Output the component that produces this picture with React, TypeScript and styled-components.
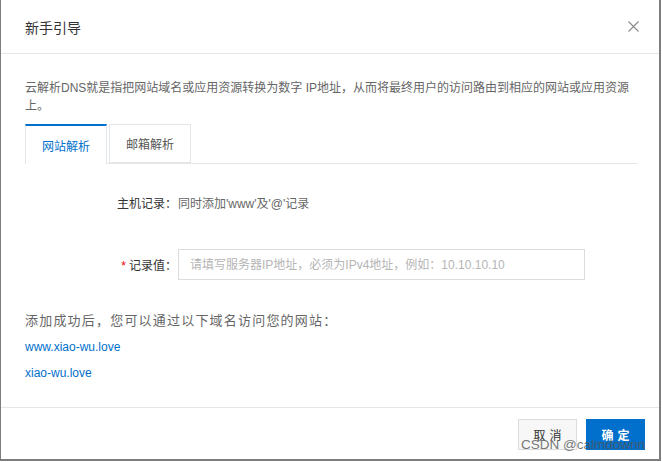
import React from 'react';
import styled, {createGlobalStyle} from "styled-components";

const GlobalStyle = createGlobalStyle`
  html, body {
    margin: 0;
    padding: 0;
    background: #fff;
  }
  body {
    font-family: "Liberation Sans", "Noto Sans CJK SC", sans-serif;
    font-size: 12px;
    color: #333;
  }
`;

const Dialog = styled.div`
  position: relative;
  box-sizing: border-box;
  width: 661px;
  height: 461px;
  display: flex;
  flex-direction: column;
  background: #fff;
  border-left: 1px solid #7d7d7d;
  border-right: 2px solid #7d7d7d;
  border-bottom: 2px solid #7d7d7d;
`;

const Header = styled.div`
  box-sizing: border-box;
  height: 54px;
  flex-shrink: 0;
  display: flex;
  align-items: center;
  justify-content: space-between;
  padding: 0 20px 0 24px;
  border-bottom: 1px solid #e6e6e6;
`;

const Title = styled.div`
  font-size: 14px;
  color: #333;
`;

const CloseButton = styled.div`
  width: 12px;
  height: 12px;
  display: flex;
  align-items: center;
  justify-content: center;
  cursor: pointer;
`;

const Body = styled.div`
  flex: 1;
  padding: 25px 22px 0 24px;
`;

const Description = styled.div`
  max-width: 608px;
  line-height: 18px;
  color: #666;
`;

const TabStrip = styled.div`
  display: flex;
  margin-top: 9px;
  height: 39px;
  border-bottom: 1px solid #e6e6e6;
`;

const Tab = styled.div<{ $active?: boolean }>`
  box-sizing: border-box;
  width: 82px;
  height: ${props => props.$active ? '40px' : '39px'};
  margin-right: 2px;
  display: flex;
  align-items: center;
  justify-content: center;
  border: 1px solid #e3e6eb;
  border-top: ${props => props.$active ? '2px solid #0070cc' : '1px solid #e3e6eb'};
  border-bottom: ${props => props.$active ? 'none' : '1px solid #e3e6eb'};
  background: #fff;
  color: ${props => props.$active ? '#0070cc' : '#555'};
  cursor: pointer;
`;

const Form = styled.div`
  padding-top: 23px;
  display: flex;
  flex-direction: column;
`;

const FormRow = styled.div<{ $gap?: number }>`
  display: flex;
  align-items: center;
  min-height: 31px;
  margin-top: ${props => props.$gap || 0}px;
`;

const Label = styled.div`
  width: 152px;
  text-align: right;
  color: #333;
`;

const Required = styled.span`
  color: #e00;
  margin-right: 3px;
`;

const Value = styled.div`
  margin-left: 1px;
  color: #666;
`;

const Input = styled.input`
  box-sizing: border-box;
  margin-left: 1px;
  width: 407px;
  height: 31px;
  padding: 0 11px;
  border: 1px solid #dcdcdc;
  outline: none;
  font-family: inherit;
  font-size: 12px;
  color: #333;
  &::placeholder {
    color: #b5b5b5;
  }
`;

const Notice = styled.div`
  margin-top: 31px;
  line-height: 20px;
  font-size: 13px;
  letter-spacing: 1.2px;
  color: #666;
`;

const Link = styled.a`
  display: block;
  line-height: 26px;
  color: #0070cc;
  text-decoration: none;
  &:first-of-type {
    margin-top: 3px;
  }
`;

const Footer = styled.div`
  box-sizing: border-box;
  height: 52px;
  flex-shrink: 0;
  border-top: 1px solid #e6e6e6;
  display: flex;
  justify-content: flex-end;
  align-items: flex-start;
  gap: 9px;
  padding: 11px 14px 0 0;
`;

const Button = styled.button<{ $primary?: boolean }>`
  box-sizing: border-box;
  width: 59px;
  height: 31px;
  padding: 0;
  font-family: inherit;
  font-size: 12px;
  letter-spacing: 4px;
  text-indent: 4px;
  cursor: pointer;
  border: 1px solid ${props => props.$primary ? '#0070cc' : '#dcdcdc'};
  background: ${props => props.$primary ? '#0070cc' : '#f7f7f7'};
  color: ${props => props.$primary ? '#fff' : '#333'};
  font-weight: ${props => props.$primary ? 'bold' : 'normal'};
`;

const Watermark = styled.div`
  position: absolute;
  right: 14px;
  bottom: 7px;
  font-family: "Liberation Sans", sans-serif;
  font-size: 13.5px;
  color: rgba(85, 85, 85, 0.8);
  pointer-events: none;
`;

const CloseIcon = () => (
  <svg width="11" height="11" viewBox="0 0 11 11">
    <path d="M0.5 0.5 L10.5 10.5 M10.5 0.5 L0.5 10.5" stroke="#8a8a8a" strokeWidth="1.1" fill="none"/>
  </svg>
);

const App = () => {
  return (
    <>
      <GlobalStyle/>
      <Dialog>
        <Header>
          <Title>新手引导</Title>
          <CloseButton><CloseIcon/></CloseButton>
        </Header>
        <Body>
          <Description>
            云解析DNS就是指把网站域名或应用资源转换为数字 IP地址，从而将最终用户的访问路由到相应的网站或应用资源上。
          </Description>
          <TabStrip>
            <Tab $active>网站解析</Tab>
            <Tab>邮箱解析</Tab>
          </TabStrip>
          <Form>
            <FormRow>
              <Label>主机记录：</Label>
              <Value>同时添加'www'及'@'记录</Value>
            </FormRow>
            <FormRow $gap={31}>
              <Label><Required>*</Required>记录值：</Label>
              <Input placeholder="请填写服务器IP地址，必须为IPv4地址，例如：10.10.10.10"/>
            </FormRow>
          </Form>
          <Notice>添加成功后，您可以通过以下域名访问您的网站：</Notice>
          <Link href="#">www.xiao-wu.love</Link>
          <Link href="#">xiao-wu.love</Link>
        </Body>
        <Footer>
          <Button>取消</Button>
          <Button $primary>确定</Button>
        </Footer>
        <Watermark>CSDN @calmdownn</Watermark>
      </Dialog>
    </>
  );
}

export default App
